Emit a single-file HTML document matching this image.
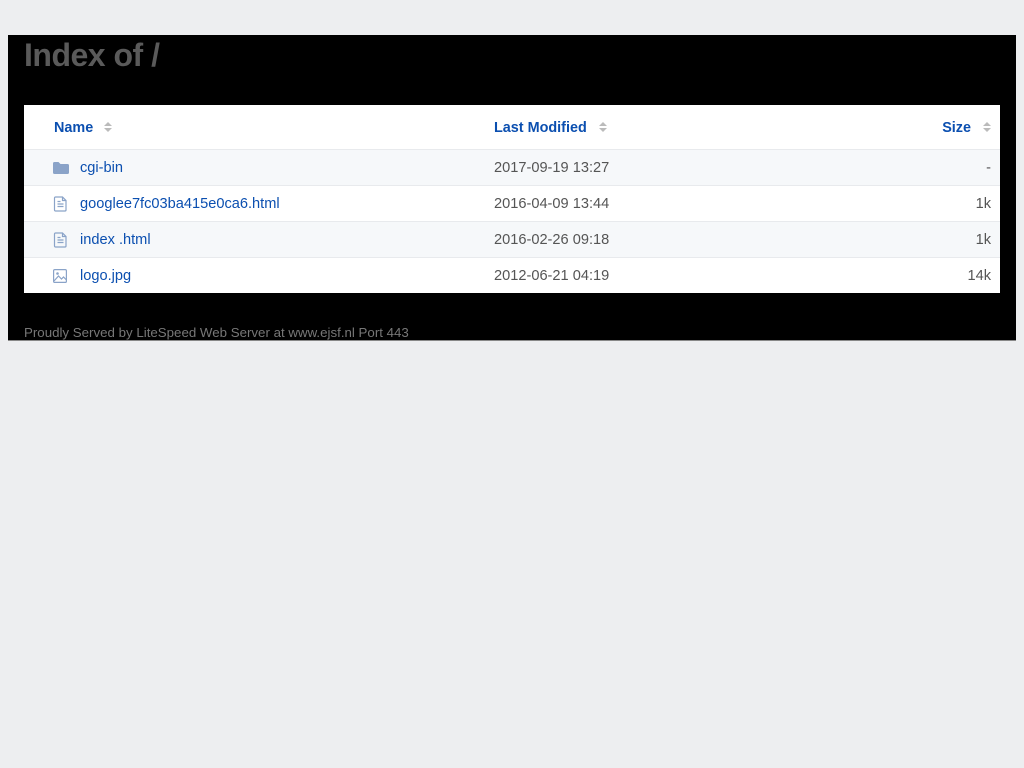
<!DOCTYPE html>
<html><head><meta charset="utf-8"><style>
html,body{margin:0;padding:0;background:#edeef0;width:1024px;height:768px;overflow:hidden;font-family:"Liberation Sans",sans-serif;}
#box{position:absolute;left:8px;top:35px;width:1008px;height:305px;background:#000;border-bottom:1px solid #888;}
h1{position:absolute;left:24px;top:36px;margin:0;font-size:32px;font-weight:bold;color:#5a5a5a;letter-spacing:-0.5px;line-height:38px;}
#tbl{position:absolute;left:24px;top:105px;width:976px;height:188px;background:#fff;}
.row{position:absolute;left:0;width:976px;height:36px;border-top:1px solid #e8eaed;font-size:14.6px;line-height:37px;}
.alt{background:#f6f8fa;}
.hd{position:absolute;top:0;height:44px;line-height:46px;font-size:14.4px;font-weight:bold;color:#0b4fb0;}
.ar{display:inline-block;vertical-align:middle;margin-left:10px;width:0;position:relative;top:-6px}
.ar:before{content:"";position:absolute;border:4px solid transparent;border-bottom:4px solid #bbb;border-top:0;left:0;top:0}
.ar:after{content:"";position:absolute;border:4px solid transparent;border-top:4px solid #bbb;border-bottom:0;left:0;top:6px}
.nm{position:absolute;left:56px;color:#0b4fb0;}
.dt{position:absolute;left:470px;color:#555;}
.sz{position:absolute;right:9px;color:#555;}
.ic{position:absolute;left:28px;top:10px;}
#ft{position:absolute;left:24px;top:325px;font-size:13.3px;color:#777;}
</style></head><body>
<div id="box"></div>
<h1>Index of /</h1>
<div id="tbl">
<div class="hd" style="left:30px">Name<span class="ar" style="margin-left:11px"></span></div>
<div class="hd" style="left:470px">Last Modified<span class="ar" style="margin-left:12px"></span></div>
<div class="hd" style="right:17px">Size<span class="ar" style="margin-left:12px"></span></div>
<div class="row alt" style="top:44px">
<svg class="ic" width="18" height="16" viewBox="0 0 18 16"><path d="M1 3.5a1.5 1.5 0 0 1 1.5-1.5h4l2 2h7a1.5 1.5 0 0 1 1.5 1.5v7a1.5 1.5 0 0 1-1.5 1.5h-13A1.5 1.5 0 0 1 1 12.5z" fill="#8aa3c8"/></svg>
<span class="nm">cgi-bin</span><span class="dt">2017-09-19 13:27</span><span class="sz">-</span></div>
<div class="row" style="top:80px">
<svg class="ic" width="18" height="16" viewBox="0 0 18 16"><path d="M3.5 1h7l3.5 3.5V14a1 1 0 0 1-1 1h-9.5a1 1 0 0 1-1-1V2a1 1 0 0 1 1-1zM10.5 1v3.5H14M5.5 8h6M5.5 10.5h6M5.5 5.5h3" fill="none" stroke="#8aa3c8" stroke-width="1.2"/></svg>
<span class="nm">googlee7fc03ba415e0ca6.html</span><span class="dt">2016-04-09 13:44</span><span class="sz">1k</span></div>
<div class="row alt" style="top:116px">
<svg class="ic" width="18" height="16" viewBox="0 0 18 16"><path d="M3.5 1h7l3.5 3.5V14a1 1 0 0 1-1 1h-9.5a1 1 0 0 1-1-1V2a1 1 0 0 1 1-1zM10.5 1v3.5H14M5.5 8h6M5.5 10.5h6M5.5 5.5h3" fill="none" stroke="#8aa3c8" stroke-width="1.2"/></svg>
<span class="nm">index .html</span><span class="dt">2016-02-26 09:18</span><span class="sz">1k</span></div>
<div class="row" style="top:152px">
<svg class="ic" width="18" height="16" viewBox="0 0 18 16"><rect x="1.6" y="1.6" width="12.8" height="12.8" rx="1.2" fill="none" stroke="#8aa3c8" stroke-width="1.2"/><circle cx="5.5" cy="5.5" r="1.3" fill="#8aa3c8"/><path d="M2 13l4.5-5 3 3 2-2 3 3" fill="none" stroke="#8aa3c8" stroke-width="1.2"/></svg>
<span class="nm">logo.jpg</span><span class="dt">2012-06-21 04:19</span><span class="sz">14k</span></div>
</div>
<div id="ft">Proudly Served by LiteSpeed Web Server at www.ejsf.nl Port 443</div>
</body></html>
